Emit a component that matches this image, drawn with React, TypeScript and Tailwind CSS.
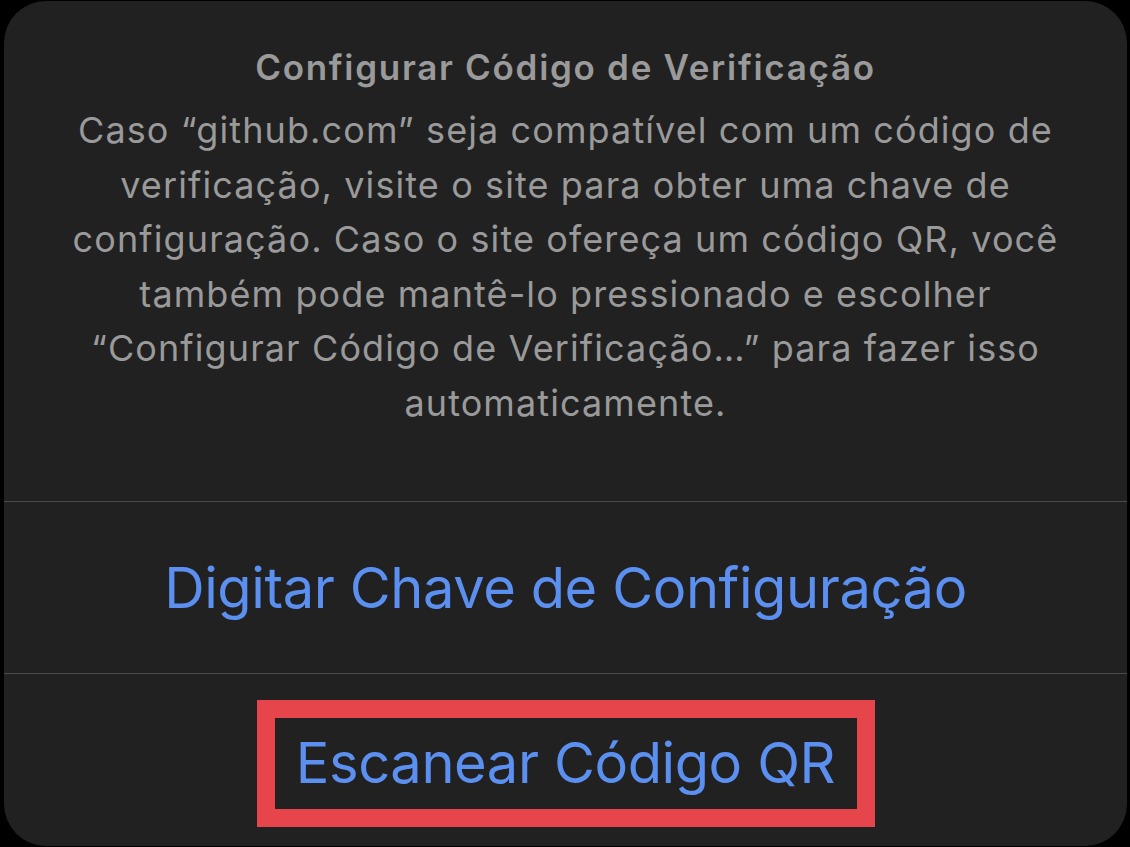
export default function App() {
  const font = { fontFamily: 'Inter, "Noto Sans", sans-serif' };
  return (
    <div className="w-[1130px] h-[847px] bg-black overflow-hidden" style={font}>
      <div className="ml-[4px] mr-[3px] mt-[1px] h-[845px] rounded-[42px] bg-[#212121] flex flex-col">
        <div className="h-[500px] flex flex-col items-center pt-[44px] px-[20px] text-[#9a9a9a] text-center">
          <div className="text-[35px] font-semibold leading-[44px] tracking-[1.7px] whitespace-nowrap">
            Configurar Código de Verificação
          </div>
          <div className="mt-[14px] text-[36px] leading-[54.5px] tracking-[1.1px] whitespace-nowrap">
            Caso “github.com” seja compatível com um código de<br />
            verificação, visite o site para obter uma chave de<br />
            configuração. Caso o site ofereça um código QR, você<br />
            também pode mantê-lo pressionado e escolher<br />
            “Configurar Código de Verificação…” para fazer isso<br />
            automaticamente.
          </div>
        </div>
        <div className="h-px bg-[#4a4a4a]" />
        <div className="h-[171px] flex items-center justify-center text-[#5b8ff0] text-[56px] tracking-[-0.4px]">
          Digitar Chave de Configuração
        </div>
        <div className="h-px bg-[#4a4a4a]" />
        <div className="flex-1 flex items-center justify-center">
          <div className="w-[618px] h-[127px] mt-[6px] border-[18px] border-[#e5454b] flex items-center justify-center text-[#5b8ff0] text-[56px] tracking-[-0.4px]">
            Escanear Código QR
          </div>
        </div>
      </div>
    </div>
  );
}
